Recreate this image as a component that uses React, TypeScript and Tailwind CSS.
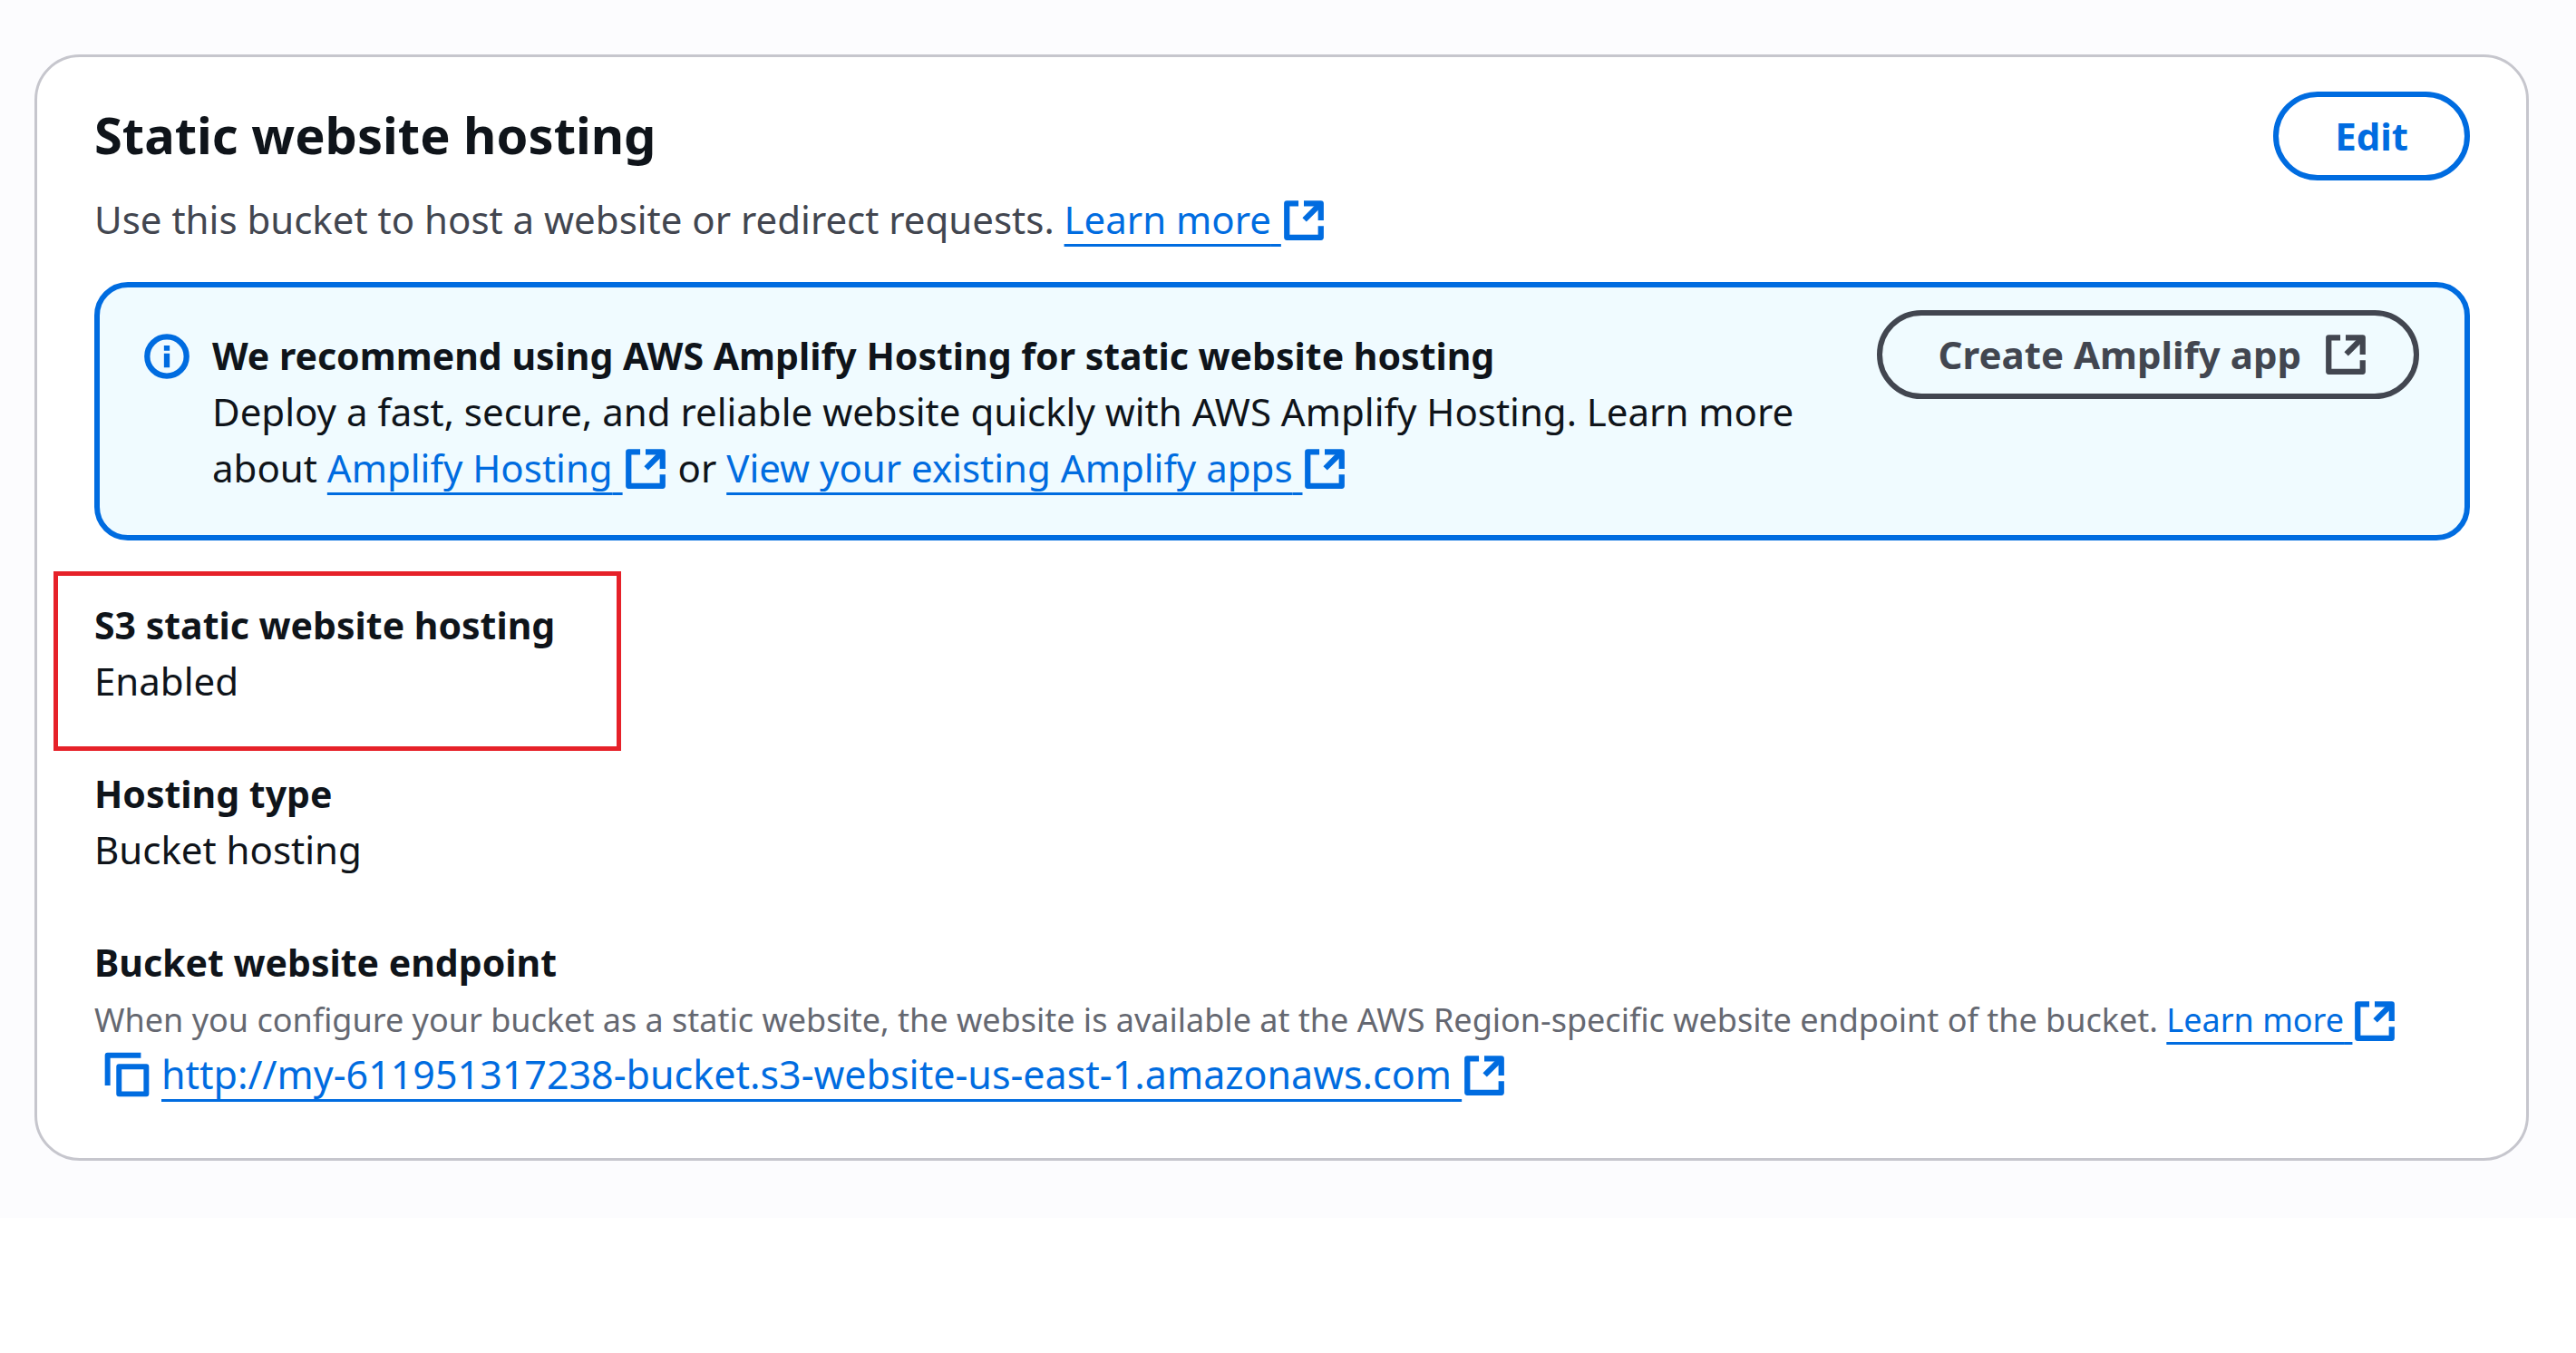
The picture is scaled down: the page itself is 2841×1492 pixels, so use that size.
import type { ReactNode } from "react";

function ExternalIcon({ className = "" }: { className?: string }) {
  return (
    <svg
      viewBox="0 0 16 16"
      fill="none"
      stroke="currentColor"
      strokeWidth="2"
      strokeLinejoin="round"
      aria-hidden="true"
      className={`inline-block size-[50px] ${className}`}
    >
      <path d="M14 8V2H8" />
      <path d="M14 10v4H2V2h4.1" />
      <path d="M8.2 7.8 14 2" />
    </svg>
  );
}

function InfoIcon() {
  return (
    <svg
      viewBox="0 0 16 16"
      fill="none"
      stroke="currentColor"
      strokeWidth="1.8"
      aria-hidden="true"
      className="mt-1 size-[56px] shrink-0 text-[#006ce0]"
    >
      <circle cx="8" cy="8" r="6.2" />
      <path d="M8 11.5V7.1M8 6.2V4.6" />
    </svg>
  );
}

function CopyIcon() {
  return (
    <svg
      viewBox="0 0 16 16"
      fill="none"
      stroke="currentColor"
      strokeWidth="1.7"
      strokeLinejoin="round"
      aria-hidden="true"
      className="size-[56px]"
    >
      <path d="M1.9 11.4V1.9h10.5" />
      <path d="M5.5 5.5h8.6v8.6H5.5z" />
    </svg>
  );
}

function ExternalLink({ children, small = false }: { children: ReactNode; small?: boolean }) {
  return (
    <a href="#" className="text-[#006ce0]">
      <span className="underline decoration-[3px] underline-offset-[11px] [text-decoration-skip-ink:none]">
        {children}&nbsp;
      </span>
      <ExternalIcon className={small ? "align-[-13px]" : "align-[-10px]"} />
    </a>
  );
}

function Field({ label, children }: { label: string; children: ReactNode }) {
  return (
    <div>
      <dt className="text-[41px] font-bold">{label}</dt>
      <dd>{children}</dd>
    </div>
  );
}

export default function App() {
  return (
    <main className="bg-[#fcfcfe] px-[38px] pt-[60px] pb-[63px] pr-[52px] font-['Noto_Sans',sans-serif] text-[42px] leading-[62px] text-[#0f141a]">
      <section className="rounded-[50px] border-3 border-[#c6c6cd] bg-white pt-[38px] pr-[62px] pb-[61px] pl-[63px]">
        <header className="flex items-start justify-between">
          <div>
            <h2 className="text-[56px] leading-[94px] font-bold">Static website hosting</h2>
            <p className="mt-4 text-[#424650]">
              Use this bucket to host a website or redirect requests. <ExternalLink>Learn more</ExternalLink>
            </p>
          </div>
          <button className="rounded-full border-6 border-[#006ce0] px-[62px] py-3 font-bold text-[#006ce0]">
            Edit
          </button>
        </header>

        <div className="mt-[38px] flex items-start rounded-[37px] border-6 border-[#006ce0] bg-[#f0fbff] px-[46px] py-[25px]">
          <div className="flex grow gap-[22px] pt-[19px] pb-[18px]">
            <InfoIcon />
            <div className="max-w-[1790px]">
              <h3 className="text-[41px] font-bold">
                We recommend using AWS Amplify Hosting for static website hosting
              </h3>
              <p>
                Deploy a fast, secure, and reliable website quickly with AWS Amplify Hosting. Learn more about{" "}
                <ExternalLink>Amplify Hosting</ExternalLink> or{" "}
                <ExternalLink>View your existing Amplify apps</ExternalLink>
              </p>
            </div>
          </div>
          <button className="mr-1 flex shrink-0 items-center gap-6 rounded-full border-6 border-[#424650] px-[62px] py-3 font-bold text-[#424650]">
            Create Amplify app
            <ExternalIcon className="-mr-3" />
          </button>
        </div>

        <dl className="mt-[62px] flex flex-col gap-[62px]">
          <div className="relative">
            <Field label="S3 static website hosting">Enabled</Field>
            <div className="pointer-events-none absolute -top-7 -left-[45px] h-[198px] w-[626px] border-5 border-[#e62129]" />
          </div>
          <Field label="Hosting type">Bucket hosting</Field>
          <Field label="Bucket website endpoint">
            <p className="pt-0.5 text-[36px] text-[#656871]">
              When you configure your bucket as a static website, the website is available at the AWS Region-specific
              website endpoint of the bucket. <ExternalLink small>Learn more</ExternalLink>
            </p>
            <div className="-mt-0.5 flex items-center gap-2.5 pl-2 text-[43px]">
              <button aria-label="Copy endpoint" className="text-[#006ce0]">
                <CopyIcon />
              </button>
              <ExternalLink>http://my-611951317238-bucket.s3-website-us-east-1.amazonaws.com</ExternalLink>
            </div>
          </Field>
        </dl>
      </section>
    </main>
  );
}
